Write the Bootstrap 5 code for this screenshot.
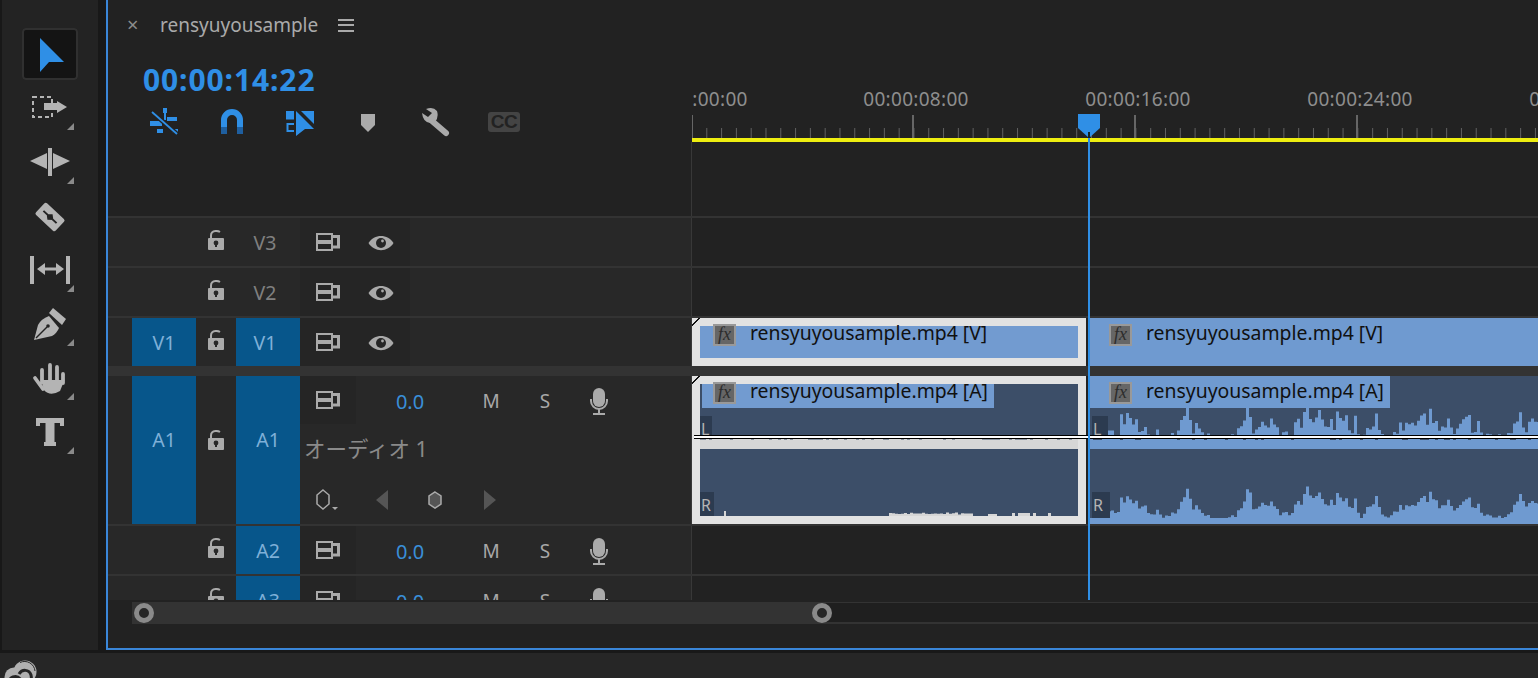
<!DOCTYPE html>
<html lang="ja">
<head>
  <meta charset="UTF-8" />
  <title>rensyuyousample</title>
  <meta name="viewport" content="width=device-width, initial-scale=1">
  <link href="https://cdn.jsdelivr.net/npm/bootstrap@5.3.3/dist/css/bootstrap.min.css" rel="stylesheet">
  <style>
    html, body { height: 678px; overflow: hidden; }
    body { background: #181818; font-family: "Noto Sans", "Noto Sans CJK JP", sans-serif; color: #9a9a9a; }
    .app-main { height: 653px; }
    .tool-panel { flex: none; width: 96px; height: 650px; margin-left: 2px; background: #232323; padding: 26px 0 0 20px; }
    .tool-btn { position: relative; width: 56px; height: 54px; }
    .tool-btn svg { display: block; width: 56px; height: 54px; }
    .tool-btn.is-active { height: 52px; margin-top: 2px; background: #141414; border-radius: 4px; box-shadow: 0 0 0 2px #303030 inset; }
    .tool-btn.is-active svg { height: 52px; }
    .tool-btn.has-fly::after { content: ""; position: absolute; right: 4px; bottom: 4px; width: 7px; height: 7px; background: #8a8a8a; clip-path: polygon(100% 0, 100% 100%, 0 100%); }
    .seq-panel { position: relative; flex: 1 1 auto; min-width: 0; height: 650px; margin-left: 8px; background: #222; border-left: 2px solid #3a86d8; border-bottom: 2px solid #3a86d8; overflow: hidden; }
    .seq-top { height: 142px; }
    .seq-head { width: 584px; flex: none; }
    .tab-row { height: 50px; padding-left: 19px; }
    .tab-x { width: 33px; font-size: 20px; line-height: 1; color: #8c8c8c; }
    .tab-title { font-size: 19px; color: #aaa; }
    .tab-menu { margin-left: 20px; width: 16px; height: 13px; border-top: 2px solid #aaa; border-bottom: 2px solid #aaa; position: relative; }
    .tab-menu::after { content: ""; position: absolute; left: 0; right: 0; top: 3.5px; height: 2px; background: #aaa; }
    .timecode { height: 40px; padding: 10px 0 0 35px; font-size: 30px; font-weight: 700; letter-spacing: .9px; line-height: 40px; color: #2f8fe6; white-space: nowrap; }
    .seq-tools { padding: 17px 0 0 22px; }
    .seq-tools > div { width: 68px; height: 34px; }
    .dy-2 { margin-top: 2px; }
    .dy-5 { margin-top: 5px; }
    .dy-6 { margin-top: 6px; }
    .cc-box { width: 32px; height: 20px; border-radius: 3px; background: #444; color: #222; font: 700 19px/20px "Liberation Sans", sans-serif; text-align: center; letter-spacing: -.5px; }
    .ruler { flex: 1 1 auto; min-width: 0; overflow: hidden; }
    .ruler-labels { margin-left: -107px; height: 115px; padding-top: 86px; }
    .ruler-labels span { flex: 0 0 222px; text-align: center; font-size: 19px; letter-spacing: .3px; line-height: 26px; color: #8e8e8e; white-space: nowrap; }
    .ruler-labels span:first-child { flex-basis: 220px; }
    .ruler-ticks { height: 23px; background-image: linear-gradient(90deg, #666 1.5px, transparent 1.5px), repeating-linear-gradient(90deg, transparent 0 220.5px, #666 220.5px 222px), linear-gradient(90deg, #606060 1.4px, transparent 1.4px); background-size: auto, auto, 14.8px 10px; background-position: 0 0, 0 0, -.5px bottom; background-repeat: no-repeat, repeat, repeat-x; }
    .ruler-play { height: 4px; background: #eeee10; }
    .track-area { height: 458px; overflow: hidden; }
    .trk { border-bottom: 2px solid #333; }
    .trk-empty { height: 76px; }
    .trk-v { height: 50px; }
    .trk-v1 { height: 58px; border-bottom: 10px solid #333; }
    .trk-a1 { height: 150px; }
    .trk-head { display: flex; flex: none; width: 584px; background: #282828; border-right: 1px solid #383838; padding-left: 24px; }
    .trk-empty .trk-head { background: #222; }
    .patch { width: 64px; flex: none; display: flex; align-items: center; justify-content: center; padding-top: 2px; font-size: 19.5px; color: #808080; }
    .patch.on { background: #07568b; color: #7fb0d8; }
    .patch-v { padding-right: 6px; }
    .lock-cell { width: 40px; flex: none; display: flex; align-items: center; justify-content: center; padding-bottom: 4px; }
    .ico-lock { width: 16px; height: 20px; }
    .ico-sync { width: 24px; height: 18px; }
    .ico-eye { width: 26px; height: 16px; }
    .ico-mic { width: 18px; height: 27px; }
    .sync-cell { width: 56px; height: 48px; flex: none; background: #252525; display: flex; align-items: center; justify-content: center; padding-bottom: 1px; }
    .eye-cell { width: 54px; height: 48px; background: #252525; display: flex; align-items: center; justify-content: center; padding: 2px 4px 0 0; }
    .vol-cell { width: 108px; flex: none; text-align: center; font-size: 20px; line-height: 48px; color: #3a8fd8; padding-top: 2px; }
    .btn-cell { width: 54px; flex: none; height: 48px; display: flex; align-items: center; justify-content: center; font-size: 19px; color: #a8a8a8; padding-top: 2px; }
    .trk-name { height: 50px; padding-left: 4px; font-size: 21.5px; line-height: 46px; color: #8a8a8a; white-space: nowrap; }
    .kf-row { height: 48px; }
    .kf-row > div { display: flex; align-items: center; justify-content: center; }
    .kf-a { width: 54px; }
    .kf-b { width: 56px; }
    .kf-c { width: 50px; }
    .kf-d { width: 60px; }
    .a1-patch { padding-top: 0; padding-bottom: 20px; }
    .trk-lane { position: relative; flex: 1 1 auto; min-width: 0; display: flex; gap: 4px; }
    .clip { position: relative; flex: none; height: 48px; background: #6f9ad0; overflow: hidden; }
    .clip-one { width: 394px; }
    .clip-two { width: 448px; }
    .clip-a { height: 148px; background: #3c4e68; }
    .clip.is-sel { background: #729bd0; box-shadow: inset 0 0 0 8px #e2e2e2; overflow: visible; }
    .clip-a.is-sel { background: #3c4e68; }
    .clip-tick { position: absolute; left: 0; top: 0; width: 8px; height: 8px; background: linear-gradient(to top left, transparent 44%, #111 44% 58%, transparent 58%); }
    .clip-title { display: flex; padding: 6px 0 0 19px; height: 32px; }
    .clip-a .clip-title { width: 300px; background: #6f9ad0; }
    .clip-a.is-sel .clip-title { width: 302px; border-top: 8px solid transparent; border-left: 10px solid transparent; background: #729bd0; background-clip: padding-box; padding: 0 0 0 11px; }
    .clip-a.is-sel .clip-title > * { margin-top: -2px; }
    .clip-v.is-sel .clip-title { padding-left: 21px; }
    .fx-box { width: 23px; height: 22px; flex: none; background: #666; border: 2px solid #999; color: #2c2c2c; font: italic 18px/17px "Liberation Serif", serif; text-align: center; }
    .clip-name { margin-left: 14px; font-size: 19.4px; line-height: 18px; color: #111; white-space: nowrap; }
    .clip-wave { display: block; width: 100%; height: 116px; }
    .chan-tag { position: absolute; background: #2c3b50; color: #b4b4b4; font-size: 16px; line-height: 1; padding: 5px 0 0 1px; }
    .key-line { position: absolute; left: 2px; right: 0; top: 59px; height: 4px; background: #fff; border-top: 1px solid #000; border-bottom: 1px solid #000; }
    .play-line { position: absolute; left: 980px; top: 132px; height: 468px; width: 2px; background: #2f8fe6; }
    .play-head { position: absolute; left: 970px; top: 114px; width: 22px; height: 24px; }
    .scroll-wrap { padding: 2px 0 0 24px; }
    .scroll-bar { position: relative; height: 22px; background: #1f1f1f; border-top: 1px solid #333; border-bottom: 2px solid #333; }
    .scroll-fill { width: 690px; height: 22px; margin-top: -1px; background: #333; }
    .scroll-thumb { position: absolute; top: 0; width: 20px; height: 20px; border: 5px solid #8a8a8a; border-radius: 50%; background: #262626; }
    .scroll-thumb.at-start { left: 2px; }
    .scroll-thumb.at-end { left: 680px; }
    .app-foot { height: 25px; background: #262626; overflow: hidden; padding-left: 4px; padding-top: 7px; }
    .tag-la { left: 8px; top: 40px; width: 12px; height: 20px; }
    .tag-ra { left: 8px; top: 116px; width: 14px; height: 24px; }
    .tag-lb { left: 2px; top: 40px; width: 16px; height: 20px; }
    .tag-rb { left: 2px; top: 116px; width: 18px; height: 26px; }
  </style>
</head>
<body>
  <svg width="0" height="0" class="position-absolute">
    <symbol id="s-lock" viewBox="0 0 16 20">
      <rect x="0" y="8" width="16" height="12" rx="1" fill="#aaa"/>
      <path d="M3 8V5.5Q3 1.5 7.5 1Q10 .8 12 2" fill="none" stroke="#aaa" stroke-width="2"/>
      <circle cx="8" cy="13" r="2.4" fill="#282828"/><rect x="7" y="13" width="2" height="4" fill="#282828"/>
    </symbol>
    <symbol id="s-sync" viewBox="0 0 24 18">
      <rect x="1" y="1" width="15" height="7" fill="none" stroke="#aaa" stroke-width="2"/>
      <rect x="1" y="10" width="15" height="7" fill="none" stroke="#aaa" stroke-width="2"/>
      <path d="M16 3.500H22.500V14H16" fill="none" stroke="#aaa" stroke-width="3"/>
    </symbol>
    <symbol id="s-eye" viewBox="0 0 26 16">
      <path d="M.5 8C6-1.500 20-1.500 25.500 8C20 17.500 6 17.500 .5 8Z" fill="#aaa"/>
      <circle cx="13" cy="8" r="5" fill="#262626"/><circle cx="14.500" cy="6" r="1.400" fill="#aaa"/>
    </symbol>
    <symbol id="s-mic" viewBox="0 0 18 27">
      <rect x="3" y="0" width="12" height="19" rx="6" fill="#aaa"/>
      <path d="M1 11V13A8 8 0 0 0 17 13V11" fill="none" stroke="#aaa" stroke-width="2"/>
      <rect x="8" y="21" width="2" height="4" fill="#aaa"/><rect x="3" y="25" width="12" height="2" fill="#aaa"/>
    </symbol>
  </svg>

  <div class="app-main d-flex">
    <div class="tool-panel d-flex flex-column">
      <div class="tool-btn is-active">
        <svg viewBox="22 28 56 52"><polygon points="40,38 64,62 49,62 40,72" fill="#2f8fe6"/></svg>
      </div>
      <div class="tool-btn has-fly">
        <svg viewBox="22 80 56 54">
          <rect x="33" y="97" width="19" height="20" fill="none" stroke="#b4b4b4" stroke-width="2" stroke-dasharray="4 3"/>
          <path d="M44 103H57V101L67 107L57 113V110H44Z" fill="#b4b4b4"/>
        </svg>
      </div>
      <div class="tool-btn has-fly">
        <svg viewBox="22 134 56 54">
          <rect x="48" y="148" width="4" height="28" fill="#b4b4b4"/>
          <path d="M30 161L47 153V169ZM70 161L53 153V169Z" fill="#b4b4b4"/>
        </svg>
      </div>
      <div class="tool-btn">
        <svg viewBox="22 188 56 54">
          <g transform="rotate(43 50 217)">
            <rect x="36.500" y="209" width="27" height="16" rx="2" fill="#b4b4b4"/>
            <path d="M41 217H59M50 214.500L53 217L50 219.500L47 217Z" stroke="#232323" stroke-width="2" fill="#232323"/>
          </g>
        </svg>
      </div>
      <div class="tool-btn has-fly">
        <svg viewBox="22 242 56 54">
          <rect x="30" y="256" width="4" height="28" fill="#b4b4b4"/>
          <rect x="66" y="256" width="4" height="28" fill="#b4b4b4"/>
          <path d="M37 269L45 263V267.500H56V263L64 269L56 275V270.500H45V275Z" fill="#b4b4b4"/>
        </svg>
      </div>
      <div class="tool-btn has-fly">
        <svg viewBox="22 296 56 54">
          <path d="M53 308L66 319L62 325L49 313Z" fill="#b4b4b4"/>
          <path d="M34 340L38 325Q41 319 49 316L59 328Q57 333 52 336Z" fill="#b4b4b4"/>
          <path d="M36 338L47 327" stroke="#232323" stroke-width="1.500"/><circle cx="48" cy="326" r="1.800" fill="#232323"/>
        </svg>
      </div>
      <div class="tool-btn has-fly">
        <svg viewBox="22 350 56 54">
          <path d="M42 382V370M50 380V365M57 381V367M63 383V374M35 378L43 389" stroke="#b4b4b4" stroke-width="3.800" stroke-linecap="round" fill="none"/>
          <path d="M41 380H64.500L60 391Q50 397 44 390Z" fill="#b4b4b4"/>
        </svg>
      </div>
      <div class="tool-btn has-fly">
        <svg viewBox="22 404 56 54">
          <path d="M36 418H64V426H60V423H54.500V442H56V446H44V442H45.500V423H40V426H36Z" fill="#b4b4b4"/>
        </svg>
      </div>
    </div>

    <div class="seq-panel">
      <div class="seq-top d-flex">
        <div class="seq-head">
          <div class="tab-row d-flex align-items-center">
            <div class="tab-x">×</div>
            <div class="tab-title">rensyuyousample</div>
            <div class="tab-menu"></div>
          </div>
          <div class="timecode">00:00:14:22</div>
          <div class="seq-tools d-flex">
            <div class="d-flex justify-content-center">
              <svg width="30" height="28" viewBox="149 107 30 28">
                <path d="M150 121H162V126H150ZM167 117H177V121H167ZM157 129H163V133H157ZM172 129H178V133H172ZM163 108H167V113H166V120H164V113H163Z" fill="#2f8fe6"/>
                <path d="M152 112L177 134" stroke="#222" stroke-width="4.500"/><path d="M152 112L177 134" stroke="#2f8fe6" stroke-width="1.800"/>
              </svg>
            </div>
            <div class="d-flex justify-content-center">
              <svg class="dy-2" width="24" height="26" viewBox="220 109 24 26">
                <path d="M224 127V120A8 8 0 0 1 240 120V127" fill="none" stroke="#2f8fe6" stroke-width="6"/>
                <path d="M221 127H227V134H221ZM237 127H243V134H237Z" fill="#1f5f9f"/>
              </svg>
            </div>
            <div class="d-flex justify-content-center">
              <svg class="dy-2" width="30" height="28" viewBox="285 109 30 28">
                <rect x="286" y="111" width="8" height="8.500" fill="#2f8fe6"/>
                <path d="M294 124H287.500V131H294" fill="none" stroke="#2f8fe6" stroke-width="2"/>
                <path d="M296 111L314 129H305L296 136Z" fill="#2f8fe6"/>
                <path d="M301 111H314V124Z" fill="#2f8fe6"/>
              </svg>
            </div>
            <div class="d-flex justify-content-center">
              <svg class="dy-6" width="16" height="20" viewBox="361 113 16 20"><path d="M362 114H376V125L369 132L362 125Z" fill="#aaa"/></svg>
            </div>
            <div class="d-flex justify-content-center">
              <svg width="30" height="30" viewBox="421 107 30 30">
                <path d="M432 121L446 133" stroke="#aaa" stroke-width="6" stroke-linecap="round"/>
                <path d="M422 113L428 117L432 113L426 109Q433 106 437 111Q439 117 435 122L430 123Q423 122 422 113Z" fill="#aaa"/>
              </svg>
            </div>
            <div class="d-flex justify-content-center"><div class="cc-box dy-5">CC</div></div>
          </div>
        </div>
        <div class="ruler">
          <div class="ruler-labels d-flex">
            <span>00:00:00:00</span><span>00:00:08:00</span><span>00:00:16:00</span><span>00:00:24:00</span><span>00:00:32:00</span>
          </div>
          <div class="ruler-ticks"></div>
          <div class="ruler-play"></div>
        </div>
      </div>

      <div class="track-area">
        <div class="trk trk-empty d-flex"><div class="trk-head"></div></div>

        <div class="trk trk-v d-flex">
          <div class="trk-head">
            <div class="patch"></div>
            <div class="lock-cell"><svg class="ico-lock"><use href="#s-lock"/></svg></div>
            <div class="patch patch-v">V3</div>
            <div class="sync-cell"><svg class="ico-sync"><use href="#s-sync"/></svg></div>
            <div class="eye-cell"><svg class="ico-eye"><use href="#s-eye"/></svg></div>
          </div>
          <div class="trk-lane"></div>
        </div>
        <div class="trk trk-v d-flex">
          <div class="trk-head">
            <div class="patch"></div>
            <div class="lock-cell"><svg class="ico-lock"><use href="#s-lock"/></svg></div>
            <div class="patch patch-v">V2</div>
            <div class="sync-cell"><svg class="ico-sync"><use href="#s-sync"/></svg></div>
            <div class="eye-cell"><svg class="ico-eye"><use href="#s-eye"/></svg></div>
          </div>
          <div class="trk-lane"></div>
        </div>
        <div class="trk trk-v1 d-flex">
          <div class="trk-head">
            <div class="patch on">V1</div>
            <div class="lock-cell"><svg class="ico-lock"><use href="#s-lock"/></svg></div>
            <div class="patch on patch-v">V1</div>
            <div class="sync-cell"><svg class="ico-sync"><use href="#s-sync"/></svg></div>
            <div class="eye-cell"><svg class="ico-eye"><use href="#s-eye"/></svg></div>
          </div>
          <div class="trk-lane">
            <div class="clip clip-v clip-one is-sel">
              <div class="clip-tick"></div>
              <div class="clip-title"><div class="fx-box">fx</div><div class="clip-name">rensyuyousample.mp4 [V]</div></div>
            </div>
            <div class="clip clip-v clip-two">
              <div class="clip-title"><div class="fx-box">fx</div><div class="clip-name">rensyuyousample.mp4 [V]</div></div>
            </div>
          </div>
        </div>

        <div class="trk trk-a1 d-flex">
          <div class="trk-head">
            <div class="patch on a1-patch">A1</div>
            <div class="lock-cell a1-patch"><svg class="ico-lock"><use href="#s-lock"/></svg></div>
            <div class="patch on a1-patch">A1</div>
            <div class="flex-grow-1">
              <div class="d-flex">
                <div class="sync-cell"><svg class="ico-sync"><use href="#s-sync"/></svg></div>
                <div class="vol-cell">0.0</div>
                <div class="btn-cell">M</div><div class="btn-cell">S</div>
                <div class="btn-cell"><svg class="ico-mic"><use href="#s-mic"/></svg></div>
              </div>
              <div class="trk-name">オーディオ 1</div>
              <div class="kf-row d-flex">
                <div class="kf-a">
                  <svg width="24" height="22" viewBox="315 490 24 22">
                    <path d="M323 491L329 496V505L323 510L317 505V496Z" fill="none" stroke="#aaa" stroke-width="1.500"/>
                    <path d="M332 508H338L335 511Z" fill="#aaa"/>
                  </svg>
                </div>
                <div class="kf-b"><svg width="12" height="20" viewBox="0 0 12 20"><path d="M12 0V20L0 10Z" fill="#555"/></svg></div>
                <div class="kf-c"><svg width="14" height="18" viewBox="0 0 14 18"><path d="M7 1L13 5V13L7 17L1 13V5Z" fill="#555" stroke="#aaa" stroke-width="1.500"/></svg></div>
                <div class="kf-d"><svg width="12" height="20" viewBox="0 0 12 20"><path d="M0 0V20L12 10Z" fill="#555"/></svg></div>
              </div>
            </div>
          </div>
          <div class="trk-lane">
            <div class="clip clip-a clip-one is-sel">
              <div class="clip-tick"></div>
              <div class="clip-title"><div class="fx-box">fx</div><div class="clip-name">rensyuyousample.mp4 [A]</div></div>
              <svg class="clip-wave" id="wave-one" viewBox="0 0 394 116"></svg>
              <span class="chan-tag tag-la">L</span>
              <span class="chan-tag tag-ra">R</span>
            </div>
            <div class="clip clip-a clip-two">
              <div class="clip-title"><div class="fx-box">fx</div><div class="clip-name">rensyuyousample.mp4 [A]</div></div>
              <svg class="clip-wave" id="wave-two" viewBox="0 0 448 116"></svg>
              <span class="chan-tag tag-lb">L</span>
              <span class="chan-tag tag-rb">R</span>
            </div>
            <div class="key-line"></div>
          </div>
        </div>

        <div class="trk trk-v d-flex">
          <div class="trk-head">
            <div class="patch"></div>
            <div class="lock-cell"><svg class="ico-lock"><use href="#s-lock"/></svg></div>
            <div class="patch on">A2</div>
            <div class="sync-cell"><svg class="ico-sync"><use href="#s-sync"/></svg></div>
            <div class="vol-cell">0.0</div>
            <div class="btn-cell">M</div><div class="btn-cell">S</div>
            <div class="btn-cell"><svg class="ico-mic"><use href="#s-mic"/></svg></div>
          </div>
          <div class="trk-lane"></div>
        </div>
        <div class="trk trk-v d-flex">
          <div class="trk-head">
            <div class="patch"></div>
            <div class="lock-cell"><svg class="ico-lock"><use href="#s-lock"/></svg></div>
            <div class="patch on">A3</div>
            <div class="sync-cell"><svg class="ico-sync"><use href="#s-sync"/></svg></div>
            <div class="vol-cell">0.0</div>
            <div class="btn-cell">M</div><div class="btn-cell">S</div>
            <div class="btn-cell"><svg class="ico-mic"><use href="#s-mic"/></svg></div>
          </div>
          <div class="trk-lane"></div>
        </div>
      </div>

      <div class="scroll-wrap">
        <div class="scroll-bar">
          <div class="scroll-fill"></div>
          <span class="scroll-thumb at-start"></span>
          <span class="scroll-thumb at-end"></span>
        </div>
      </div>

      <div class="play-line"></div>
      <svg class="play-head" viewBox="0 0 22 24">
        <path d="M0 0H22V14L11 24L0 14Z" fill="#2f8fe6"/><rect x="10" y="18" width="2" height="6" fill="#122"/>
      </svg>
    </div>
  </div>

  <div class="app-foot">
    <svg width="34" height="30" viewBox="0 0 34 30">
      <circle cx="21" cy="12" r="11.500" fill="#b0b0b0"/>
      <circle cx="10" cy="17" r="9.500" fill="#b0b0b0"/>
      <path d="M16 2.500A10.500 10.500 0 0 1 31 11" fill="none" stroke="#262626" stroke-width="1"/>
      <path d="M4 26C4 16 13 14 17 20C21 26 29 24 27 15C25 9 18 9 15 14" fill="none" stroke="#262626" stroke-width="3"/>
    </svg>
  </div>

  <script>
    // peaks traced off the R channel: [x px from clip start, height px]
    const peaks = [[0,6],[25,17],[32,27],[37,25],[42,25],[47,22],[52,28],[58,13],[65,17],[73,8],[85,17],[90,22],[97,35],[103,20],[113,10],[123,6],[137,6],[150,15],[159,41],[163,17],[170,22],[178,23],[187,13],[198,13],[207,22],[218,37],[227,32],[237,23],[247,33],[253,23],[263,27],[270,7],[277,23],[287,28],[292,7],[307,18],[320,17],[327,23],[342,33],[348,22],[357,25],[367,18],[382,28],[390,13],[403,7],[417,10],[432,35],[438,22],[448,21]];

    function heightAt(x) {
      for (let i = 1; i < peaks.length; i++) {
        if (x <= peaks[i][0]) {
          const a = peaks[i - 1], b = peaks[i];
          const t = (x - a[0]) / (b[0] - a[0]);
          return a[1] + (b[1] - a[1]) * t;
        }
      }
      return 6;
    }

    function jitter(x) {
      const v = Math.sin(x * 12.9898) * 43758.5453;
      return v - Math.floor(v);
    }

    function stepPath(from, to, base, fn) {
      let d = 'M' + from + ' ' + base;
      for (let x = from; x < to; x += 3) {
        const y = (base - fn(x)).toFixed(1);
        d += 'V' + y + 'H' + (x + 3);
      }
      return d + 'V' + base + 'Z';
    }

    // right hand clip: blue waveform
    const two = document.getElementById('wave-two');
    const blue = '#6f9ad0';
    two.innerHTML =
      '<path fill="' + blue + '" d="' + stepPath(0, 448, 116, x => Math.max(6, heightAt(x) * (.6 + jitter(x) * .5))) + '"/>' +
      '<path fill="' + blue + '" d="' + stepPath(0, 448, 28, x => Math.max(0, heightAt(x) * (.35 + jitter(x) * .85) - 7)) + '"/>' +
      '<path fill="' + blue + '" d="' + stepPath(0, 448, 41, x => jitter(x + 7) > .75 ? 9 : 11) + '"/>';

    // selected clip: silence apart from a low run near the end
    const one = document.getElementById('wave-one');
    const pale = '#d6d6d6';
    const low = x => {
      if (x < 197 || x > 366) return 0;
      if (x > 280 && x < 320) return jitter(x) > .8 ? 2 : 0;
      return x < 280 ? 1.5 + jitter(x) * 2 : (jitter(x) > .7 ? 3 : 0);
    };
    let lowPath = 'M32 108V103H34V108Z';
    for (let x = 8; x < 386; x += 3) {
      const h = low(x);
      if (h > 0) lowPath += 'M' + x + ' 108V' + (108 - h).toFixed(1) + 'H' + (x + 3) + 'V108Z';
    }
    one.innerHTML =
      '<path fill="' + pale + '" d="' + stepPath(8, 386, 41, x => jitter(x + 3) > .7 ? 9.5 : 10.5) + '"/>' +
      '<path fill="' + pale + '" d="' + lowPath + '"/>';
  </script>
  <script src="https://cdn.jsdelivr.net/npm/bootstrap@5.3.3/dist/js/bootstrap.bundle.min.js"></script>
</body>
</html>
